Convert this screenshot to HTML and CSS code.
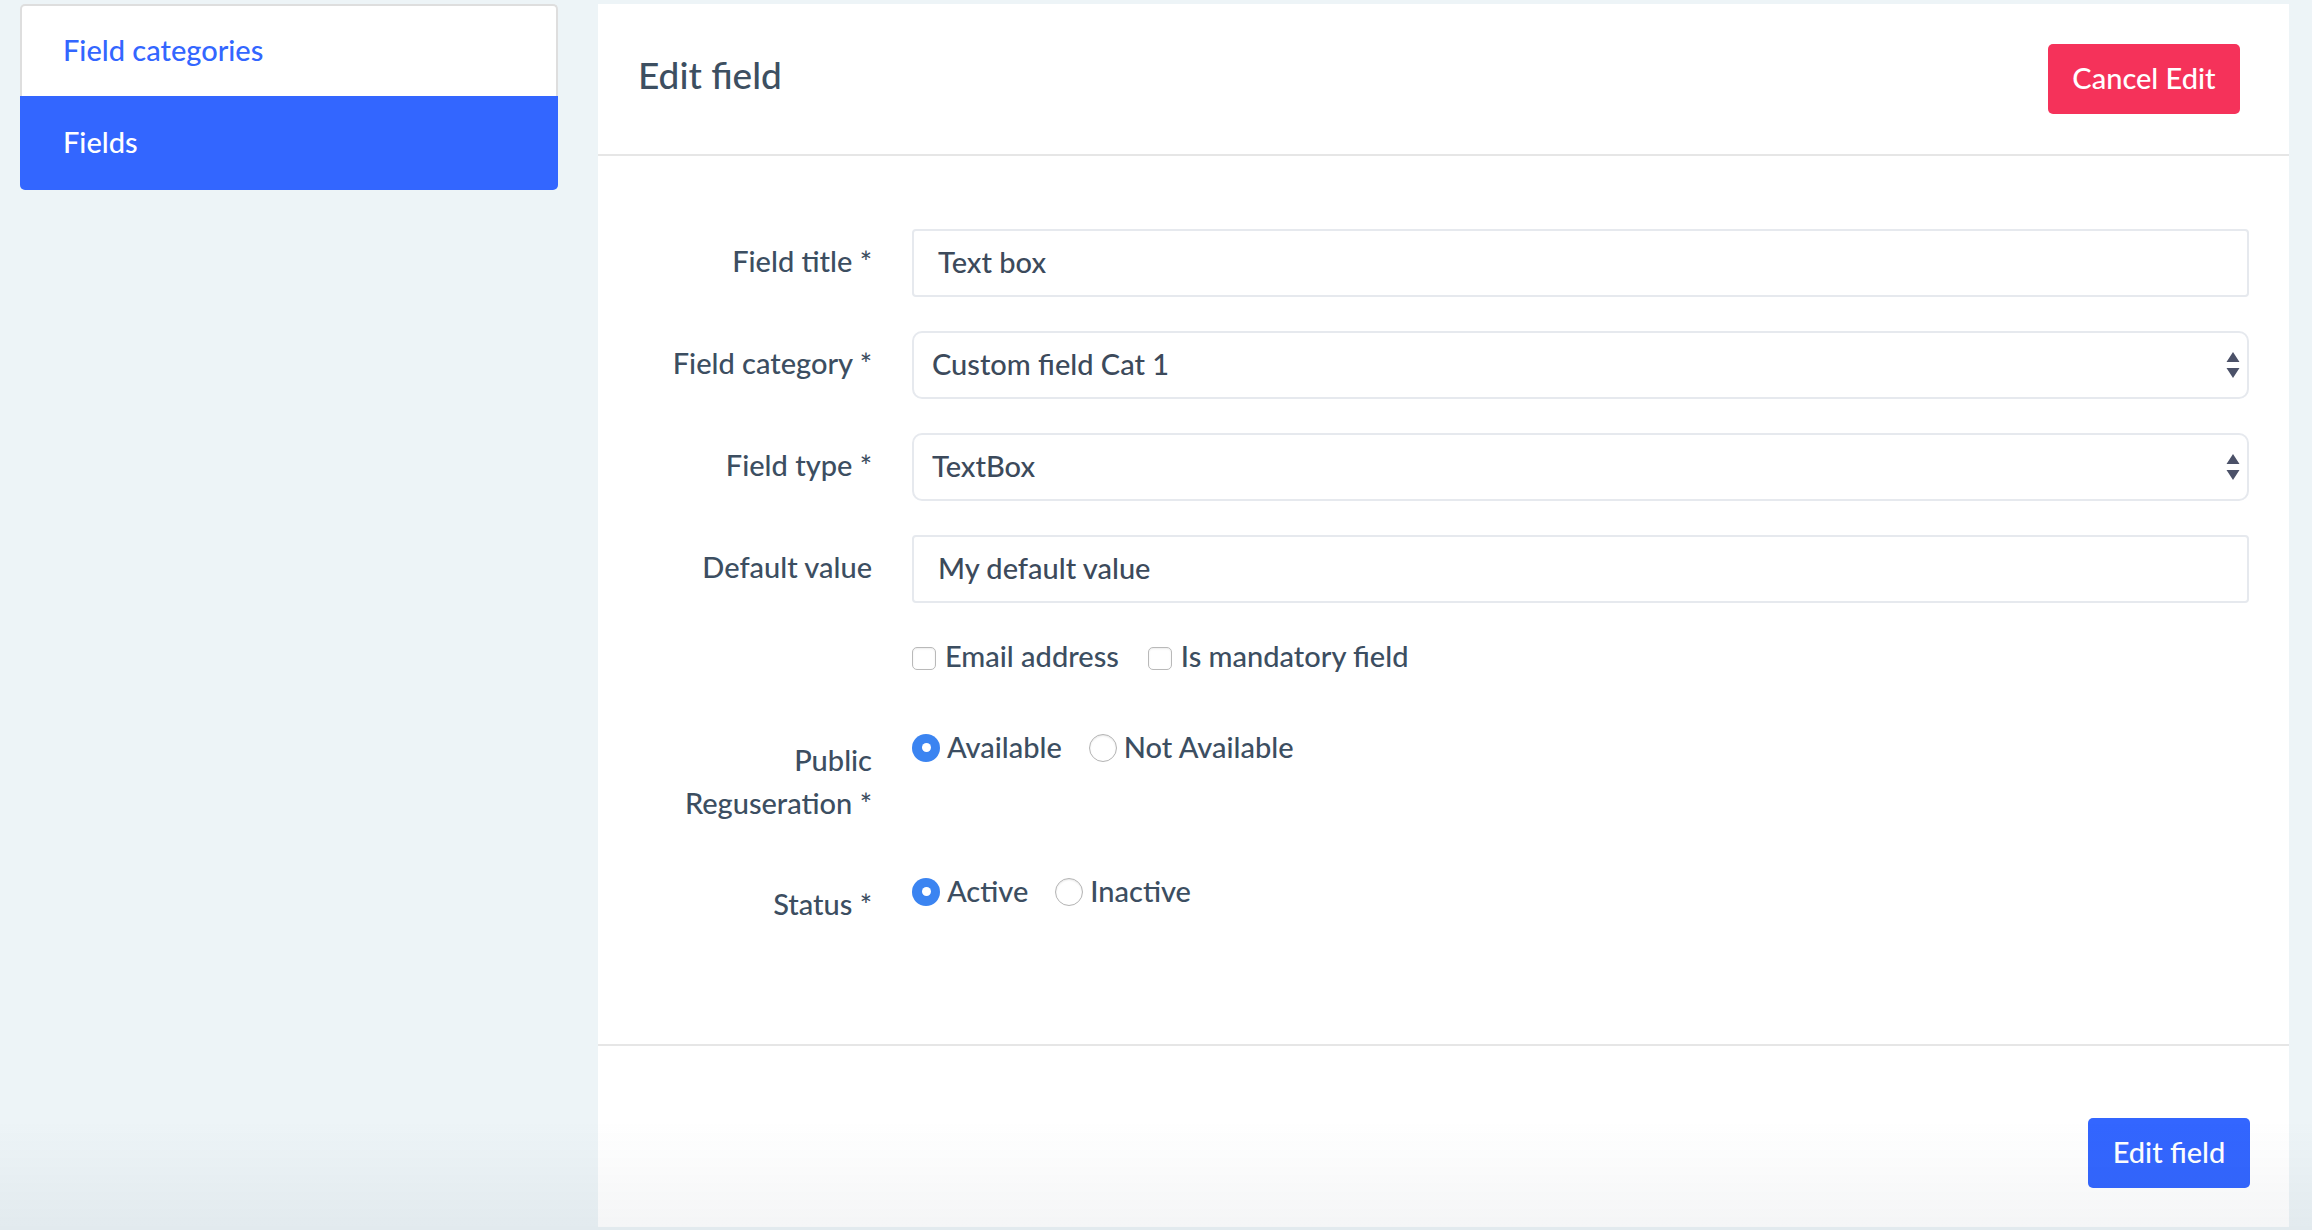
FILE: index.html
```html
<!DOCTYPE html>
<html lang="en">
<head>
<meta charset="utf-8">
<title>Edit field</title>
<link rel="stylesheet" href="styles.css">
</head>
<body>
<div class="layout">
  <nav class="sidebar">
    <a class="nav-item" href="#">Field categories</a>
    <a class="nav-item active" href="#">Fields</a>
  </nav>
  <main class="panel">
    <header class="panel-header">
      <h1 class="panel-title">Edit field</h1>
      <button class="btn btn-danger" type="button">Cancel Edit</button>
    </header>
    <section class="panel-body">
      <div class="row">
        <label class="row-label">Field title *</label>
        <div class="input input-text">Text box</div>
      </div>
      <div class="row">
        <label class="row-label">Field category *</label>
        <div class="input input-select">
          <span>Custom field Cat 1</span>
          <svg class="select-arrow" viewBox="0 0 14 26" width="14" height="26"><path d="M7 0 L13.5 10 L0.5 10 Z M0.5 16 L13.5 16 L7 26 Z" fill="#4b5168"/></svg>
        </div>
      </div>
      <div class="row">
        <label class="row-label">Field type *</label>
        <div class="input input-select">
          <span>TextBox</span>
          <svg class="select-arrow" viewBox="0 0 14 26" width="14" height="26"><path d="M7 0 L13.5 10 L0.5 10 Z M0.5 16 L13.5 16 L7 26 Z" fill="#4b5168"/></svg>
        </div>
      </div>
      <div class="row">
        <label class="row-label">Default value</label>
        <div class="input input-text">My default value</div>
      </div>
      <div class="row row-checks">
        <span class="row-label"></span>
        <div class="options options-checks">
          <span class="option"><span class="checkbox"></span><span class="option-text">Email address</span></span>
          <span class="option"><span class="checkbox"></span><span class="option-text">Is mandatory field</span></span>
        </div>
      </div>
      <div class="row row-radio row-public">
        <label class="row-label">Public Reguseration *</label>
        <div class="options">
          <span class="option"><span class="radio checked"></span><span class="option-text">Available</span></span>
          <span class="option"><span class="radio"></span><span class="option-text">Not Available</span></span>
        </div>
      </div>
      <div class="row row-radio">
        <label class="row-label">Status *</label>
        <div class="options">
          <span class="option"><span class="radio checked"></span><span class="option-text">Active</span></span>
          <span class="option"><span class="radio"></span><span class="option-text">Inactive</span></span>
        </div>
      </div>
    </section>
    <footer class="panel-footer">
      <button class="btn btn-primary" type="button">Edit field</button>
    </footer>
  </main>
</div>
</body>
</html>
```

FILE: styles.css
```css
* { box-sizing: border-box; }

html, body {
  margin: 0;
  padding: 0;
}

body {
  background: #edf4f7;
  font-family: Lato, "Noto Sans", "Liberation Sans", sans-serif;
  color: #3c4e61;
  font-size: 29px;
}

body::after {
  content: "";
  position: fixed;
  left: 0;
  right: 0;
  bottom: 0;
  height: 110px;
  background: linear-gradient(to bottom, rgba(0, 0, 0, 0), rgba(40, 60, 80, 0.05));
  pointer-events: none;
}

.layout {
  display: flex;
  align-items: flex-start;
  gap: 40px;
  min-height: 100vh;
  padding: 4px 23px 3px 20px;
}

/* Sidebar */
.sidebar {
  width: 538px;
  flex: none;
  display: flex;
  flex-direction: column;
}

.nav-item {
  display: flex;
  align-items: center;
  text-decoration: none;
  font-size: 29px;
  font-weight: 500;
  padding-bottom: 4px;
}

.nav-item:first-child {
  height: 92px;
  background: #fff;
  border: 2px solid #dedede;
  border-bottom: none;
  border-radius: 5px 5px 0 0;
  padding-left: 41px;
  color: #3366ff;
}

.nav-item.active {
  height: 94px;
  background: #3366ff;
  color: #fff;
  padding-left: 43px;
  border-radius: 0 0 5px 5px;
}

/* Panel */
.panel {
  flex: 1;
  align-self: stretch;
  background: #fff;
  display: flex;
  flex-direction: column;
}

.panel-header {
  height: 152px;
  flex: none;
  display: flex;
  align-items: center;
  justify-content: space-between;
  padding: 0 49px 0 40px;
  border-bottom: 2px solid #e6e6e6;
}

.panel-title {
  margin: 0;
  padding-bottom: 9px;
  font-size: 37px;
  font-weight: 500;
  color: #3d4f61;
}

.btn {
  height: 70px;
  border: none;
  border-radius: 5px;
  color: #fff;
  font-family: inherit;
  font-size: 29px;
  font-weight: 500;
  padding: 0 0 4px;
  cursor: pointer;
}

.btn-danger {
  width: 192px;
  background: #f5325a;
}

.btn-primary {
  width: 162px;
  background: #3366ff;
}

.panel-body {
  flex: 1;
  padding: 73px 40px 0 40px;
}

.row {
  display: grid;
  grid-template-columns: 234px 1fr;
  column-gap: 40px;
  align-items: center;
  margin-bottom: 34px;
}

.row-label {
  text-align: right;
  font-weight: 500;
  line-height: 43px;
  color: #3c4e61;
}

.row > .row-label {
  padding-bottom: 5px;
}

.input {
  height: 68px;
  border: 2px solid #e6e9ee;
  display: flex;
  align-items: center;
  color: #3c4a5b;
  font-weight: 500;
}

.input-text {
  border-radius: 4px;
  padding-left: 24px;
  padding-bottom: 3px;
}

.input-select {
  border-radius: 10px;
  padding: 0 7px 0 11px;
  justify-content: space-between;
}

.input-select span {
  padding-left: 7px;
  padding-bottom: 3px;
}

.select-arrow {
  display: block;
}

.row-checks {
  height: 40px;
  margin-bottom: 49px;
}

.options {
  display: flex;
  align-items: center;
  gap: 27px;
  height: 43px;
  font-weight: 500;
  color: #3c4e61;
}

.options-checks {
  gap: 29px;
}

.option {
  display: inline-flex;
  align-items: center;
  gap: 7px;
}

.option-text {
  padding-bottom: 3px;
}

.options-checks .option {
  gap: 9px;
}

.options-checks .option-text {
  padding-bottom: 6px;
}

.checkbox {
  width: 24px;
  height: 23px;
  border: 1.5px solid #b9b9b9;
  border-radius: 5px;
  background: #fff;
  box-shadow: inset 0 1px 2px rgba(0, 0, 0, 0.08);
}

.radio {
  width: 28px;
  height: 28px;
  border-radius: 50%;
  border: 1.5px solid #b4b4b4;
  background: #fff;
  box-shadow: inset 0 1px 2px rgba(0, 0, 0, 0.1);
  display: flex;
  align-items: center;
  justify-content: center;
}

.radio.checked {
  border: none;
  background: #3b84f1;
  box-shadow: none;
}

.radio.checked::after {
  content: "";
  width: 9px;
  height: 9px;
  border-radius: 50%;
  background: #fff;
}

.row-radio {
  align-items: start;
}

.row-radio > .row-label {
  padding-top: 12px;
  padding-bottom: 0;
}

.row-public {
  margin-bottom: 46px;
}

.panel-footer {
  flex: none;
  border-top: 2px solid #e6e6e6;
  padding: 72px 39px 39px;
  display: flex;
  justify-content: flex-end;
}
```
